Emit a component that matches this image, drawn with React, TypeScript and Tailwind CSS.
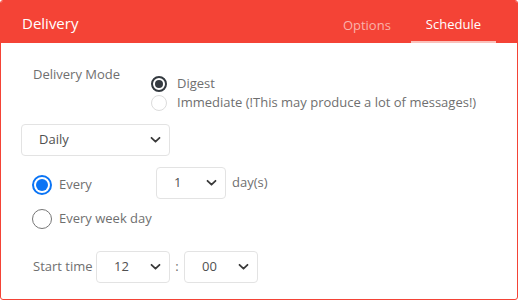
import React, { useState } from "react";

const font = { fontFamily: '"Open Sans", "Noto Sans", sans-serif' };

const Chevron: React.FC = () => (
  <svg width="11" height="7" viewBox="0 0 11 7" className="pointer-events-none absolute right-[9px] top-1/2 -translate-y-1/2">
    <path d="M1.5 1.3 L5.5 5.2 L9.5 1.3" fill="none" stroke="#3a3a3a" strokeWidth="1.8" strokeLinecap="round" strokeLinejoin="round" />
  </svg>
);

// select box with custom arrow
const Select: React.FC<{ value: string; options: string[]; className: string; onChange: (v: string) => void }> = ({
  value,
  options,
  className,
  onChange,
}) => (
  <div className={`relative ${className}`}>
    <select
      value={value}
      onChange={(e) => onChange(e.target.value)}
      className="h-full w-full appearance-none rounded-[4px] border border-[#e3e3e3] bg-white pl-[17px] text-[13px] text-[#505050] outline-none"
      style={font}
    >
      {options.map((o) => (
        <option key={o}>{o}</option>
      ))}
    </select>
    <Chevron />
  </div>
);

const App: React.FC = () => {
  const [mode, setMode] = useState("digest");
  const [freq, setFreq] = useState("Daily");
  const [repeat, setRepeat] = useState("every");
  const [days, setDays] = useState("1");
  const [hour, setHour] = useState("12");
  const [minute, setMinute] = useState("00");

  return (
    <div className="h-[301px] w-[519px] bg-white" style={font}>
      <div className="h-[300px] w-[518px] overflow-hidden rounded-[3px] border border-[#f44336] bg-white">
        {/* Header */}
        <div className="flex h-[42px] items-stretch bg-[#f44336] text-white">
          <div className="flex flex-1 items-center pl-[21px] pt-[2px] text-[15px]">Delivery</div>
          <div className="flex items-stretch pr-[21px] text-[13px]">
            <button className="px-[20px] pt-[8px] text-[#fab2ab]">Options</button>
            <button className="border-b-2 border-[#f9c1bb] px-[15px] pt-[8px] text-white">Schedule</button>
          </div>
        </div>

        {/* Body */}
        <div className="pl-[20px] text-[13px] text-[#6f6f6f]">
          {/* Delivery mode */}
          <div className="flex pt-[22px]">
            <div className="w-[130px] pl-[12px] leading-[18px]">Delivery Mode</div>
            <div className="flex flex-col pt-[9px]">
              <label className="flex h-[19px] cursor-pointer items-center gap-[10px]" onClick={() => setMode("digest")}>
                <span
                  className={`flex h-[16px] w-[16px] items-center justify-center rounded-full ${
                    mode === "digest" ? "border-2 border-[#343a40]" : "border border-[#dcdcdc]"
                  }`}
                >
                  {mode === "digest" && <span className="h-[8px] w-[8px] rounded-full bg-[#343a40]" />}
                </span>
                Digest
              </label>
              <label className="flex h-[20px] cursor-pointer items-center gap-[10px]" onClick={() => setMode("immediate")}>
                <span
                  className={`flex h-[16px] w-[16px] items-center justify-center rounded-full ${
                    mode === "immediate" ? "border-2 border-[#343a40]" : "border border-[#dcdcdc]"
                  }`}
                >
                  {mode === "immediate" && <span className="h-[8px] w-[8px] rounded-full bg-[#343a40]" />}
                </span>
                Immediate (!This may produce a lot of messages!)
              </label>
            </div>
          </div>

          {/* Frequency */}
          <Select value={freq} options={["Daily", "Weekly", "Monthly"]} className="mt-[11px] h-[32px] w-[149px]" onChange={setFreq} />

          {/* Repeat */}
          <div className="mt-[11px] flex items-center">
            <label className="mt-[4px] flex w-[135px] cursor-pointer items-center gap-[7px] pl-[11px]" onClick={() => setRepeat("every")}>
              <span
                className={`flex h-[20px] w-[20px] items-center justify-center rounded-full ${
                  repeat === "every" ? "border-2 border-[#0a74f5]" : "border border-[#767676]"
                }`}
              >
                {repeat === "every" && <span className="h-[12px] w-[12px] rounded-full bg-[#0a74f5]" />}
              </span>
              Every
            </label>
            <Select value={days} options={["1", "2", "3", "4", "5", "6", "7"]} className="h-[32px] w-[70px]" onChange={setDays} />
            <span className="ml-[6px]">day(s)</span>
          </div>
          <label className="mt-[10px] flex cursor-pointer items-center gap-[7px] pl-[11px]" onClick={() => setRepeat("weekday")}>
            <span
              className={`flex h-[20px] w-[20px] items-center justify-center rounded-full ${
                repeat === "weekday" ? "border-2 border-[#0a74f5]" : "border border-[#767676]"
              }`}
            >
              {repeat === "weekday" && <span className="h-[12px] w-[12px] rounded-full bg-[#0a74f5]" />}
            </span>
            Every week day
          </label>

          {/* Start time */}
          <div className="mt-[22px] flex items-center">
            <span className="w-[75px] pl-[12px]">Start time</span>
            <Select
              value={hour}
              options={Array.from({ length: 24 }, (_, i) => String(i).padStart(2, "0"))}
              className="h-[32px] w-[74px]"
              onChange={setHour}
            />
            <span className="w-[14px] text-center">:</span>
            <Select value={minute} options={["00", "15", "30", "45"]} className="h-[32px] w-[74px]" onChange={setMinute} />
          </div>
        </div>
      </div>
    </div>
  );
};

export default App;
